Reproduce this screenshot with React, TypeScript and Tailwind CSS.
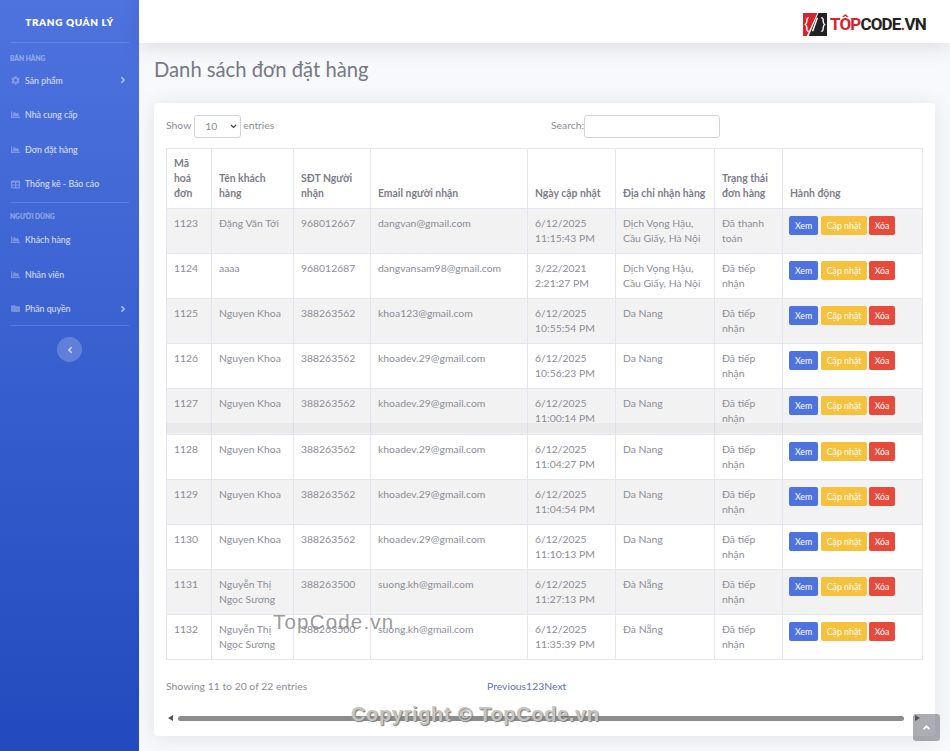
import { FaAngleLeft, FaAngleRight, FaAngleUp, FaChartArea, FaCog, FaFolder, FaTable } from 'react-icons/fa'

type Order = { id: number; name: string; phone: string; email: string; date: string; time: string; addr: string; status: string }

const hanoi = 'Dịch Vọng Hậu, Cầu Giấy, Hà Nội'

const orders: Order[] = [
    { id: 1123, name: 'Đặng Văn Tới', phone: '968012667', email: 'dangvan@gmail.com', date: '6/12/2025', time: '11:15:43 PM', addr: hanoi, status: 'Đã thanh toán' },
    { id: 1124, name: 'aaaa', phone: '968012687', email: 'dangvansam98@gmail.com', date: '3/22/2021', time: '2:21:27 PM', addr: hanoi, status: 'Đã tiếp nhận' },
    { id: 1125, name: 'Nguyen Khoa', phone: '388263562', email: 'khoa123@gmail.com', date: '6/12/2025', time: '10:55:54 PM', addr: 'Da Nang', status: 'Đã tiếp nhận' },
    { id: 1126, name: 'Nguyen Khoa', phone: '388263562', email: 'khoadev.29@gmail.com', date: '6/12/2025', time: '10:56:23 PM', addr: 'Da Nang', status: 'Đã tiếp nhận' },
    { id: 1127, name: 'Nguyen Khoa', phone: '388263562', email: 'khoadev.29@gmail.com', date: '6/12/2025', time: '11:00:14 PM', addr: 'Da Nang', status: 'Đã tiếp nhận' },
    { id: 1128, name: 'Nguyen Khoa', phone: '388263562', email: 'khoadev.29@gmail.com', date: '6/12/2025', time: '11:04:27 PM', addr: 'Da Nang', status: 'Đã tiếp nhận' },
    { id: 1129, name: 'Nguyen Khoa', phone: '388263562', email: 'khoadev.29@gmail.com', date: '6/12/2025', time: '11:04:54 PM', addr: 'Da Nang', status: 'Đã tiếp nhận' },
    { id: 1130, name: 'Nguyen Khoa', phone: '388263562', email: 'khoadev.29@gmail.com', date: '6/12/2025', time: '11:10:13 PM', addr: 'Da Nang', status: 'Đã tiếp nhận' },
    { id: 1131, name: 'Nguyễn Thị Ngọc Sương', phone: '388263500', email: 'suong.kh@gmail.com', date: '6/12/2025', time: '11:27:13 PM', addr: 'Đà Nẵng', status: 'Đã tiếp nhận' },
    { id: 1132, name: 'Nguyễn Thị Ngọc Sương', phone: '388263500', email: 'suong.kh@gmail.com', date: '6/12/2025', time: '11:35:39 PM', addr: 'Đà Nẵng', status: 'Đã tiếp nhận' },
]

const NavItem = ({ icon, label, arrow }: { icon: React.ReactNode; label: string; arrow?: boolean }) => (
    <div className="h-[34.6px] flex items-center pl-[11px] pr-[11px] text-[8.8px] text-white/80">
        <span className="w-[14px] text-[9px] text-white/30">{icon}</span>
        <span className="flex-1">{label}</span>
        {arrow && <FaAngleRight className="text-[10px] text-white/60" />}
    </div>
)

const Sidebar = () => (
    <aside className="w-[139px] shrink-0 h-full flex flex-col bg-gradient-to-b from-[#4e73df] to-[#224abe] px-[10px]">
        <div className="h-[43px] shrink-0 flex items-center justify-center text-white font-extrabold text-[10px] tracking-[0.06em] border-b border-white/15 pt-[2px]">
            TRANG QUẢN LÝ
        </div>
        <div className="pt-[10px] text-[6.6px] font-extrabold text-white/40 leading-[10px]">BÁN HÀNG</div>
        <div className="-mx-[10px]">
            <NavItem icon={<FaCog />} label="Sản phẩm" arrow />
            <NavItem icon={<FaChartArea />} label="Nhà cung cấp" />
            <NavItem icon={<FaChartArea />} label="Đơn đặt hàng" />
            <NavItem icon={<FaTable />} label="Thống kê - Báo cáo" />
        </div>
        <div className="border-t border-white/15 mt-[1px]" />
        <div className="pt-[8px] text-[6.6px] font-extrabold text-white/40 leading-[10px]">NGƯỜI DÙNG</div>
        <div className="-mx-[10px] mt-[1px]">
            <NavItem icon={<FaChartArea />} label="Khách hàng" />
            <NavItem icon={<FaChartArea />} label="Nhân viên" />
            <NavItem icon={<FaFolder />} label="Phân quyền" arrow />
        </div>
        <div className="border-t border-white/15 -mt-[1px]" />
        <button className="self-center mt-[11px] w-[25px] h-[25px] rounded-full bg-white/20 flex items-center justify-center text-white/70 text-[10px]">
            <FaAngleLeft />
        </button>
    </aside>
)

const Logo = () => (
    <div className="flex items-center gap-[2px]">
        <svg width="26" height="25" viewBox="0 0 27 26">
            <path d="M1 1h15L5 25H1z" fill="#d9232a" />
            <path d="M17 1h9v24H7z" fill="#222" />
            <path d="M7 6c-2 0-2 1-2 3s0 3-1.500 4c1.500 1 1.500 2 1.500 4s0 3 2 3" fill="none" stroke="#fff" strokeWidth="1.500" />
            <path d="M20 6c2 0 2 1 2 3s0 3 1.500 4c-1.500 1-1.500 2-1.500 4s0 3-2 3" fill="none" stroke="#fff" strokeWidth="1.500" />
            <path d="M16 6l-5 14" stroke="#fff" strokeWidth="1.500" />
        </svg>
        <span className="text-[17px] font-bold text-[#222] font-['Roboto',sans-serif] tracking-[-0.85px] leading-none">
            <span className="text-[#d9232a]">TÔP</span>CODE<span className="text-[#d9232a]">.</span>VN
        </span>
    </div>
)

const Actions = () => (
    <div className="flex gap-[3px] -ml-[1px] text-[8.8px] text-white">
        <span className="h-[19px] w-[29px] flex items-center justify-center rounded-[2px] bg-[#4e73df]">Xem</span>
        <span className="h-[19px] w-[46px] flex items-center justify-center rounded-[2px] bg-[#f6c23e]">Cập nhật</span>
        <span className="h-[19px] w-[26px] -ml-[1px] flex items-center justify-center rounded-[2px] bg-[#e74a3b]">Xóa</span>
    </div>
)

const th = "border border-[#e3e6f0] px-[7px] py-[7px] align-bottom text-left font-bold text-[#7c7d88]"
const td = "border border-[#e3e6f0] px-[7px] py-[7px] align-top"

const OrdersTable = () => (
    <table className="w-[756px] table-fixed border-collapse text-[10.4px] leading-[15px]">
        <colgroup>
            <col className="w-[45px]" />
            <col className="w-[82px]" />
            <col className="w-[77px]" />
            <col className="w-[157px]" />
            <col className="w-[88px]" />
            <col className="w-[99px]" />
            <col className="w-[68px]" />
            <col className="w-[140px]" />
        </colgroup>
        <thead>
            <tr>
                <th className={th}>Mã hoá đơn</th>
                <th className={th}>Tên khách hàng</th>
                <th className={th}>SĐT Người nhận</th>
                <th className={th}>Email người nhận</th>
                <th className={th}>Ngày cập nhật</th>
                <th className={`${th} whitespace-nowrap`}>Địa chỉ nhận hàng</th>
                <th className={th}>Trạng thái đơn hàng</th>
                <th className={th}>Hành động</th>
            </tr>
        </thead>
        <tbody>
            {orders.map((o, i) => (
                <tr key={o.id} className={`${i % 2 === 0 ? 'bg-[#f2f2f2]' : 'bg-white'} ${o.id === 1127 ? 'h-[46px]' : ''}`}>
                    <td className={td}>{o.id}</td>
                    <td className={td}>{o.name}</td>
                    <td className={td}>{o.phone}</td>
                    <td className={td}>{o.email}</td>
                    <td className={td}>{o.date}<br />{o.time}</td>
                    <td className={td}>{o.addr}</td>
                    <td className={td}>{o.status}</td>
                    <td className={td}><Actions /></td>
                </tr>
            ))}
        </tbody>
    </table>
)

const App = () => (
    <div className="relative w-[950px] h-[751px] overflow-hidden flex bg-[#f8f9fc] font-['Lato','Noto_Sans',sans-serif] text-[#8c8d97]">
        <Sidebar />
        <div className="flex-1 flex flex-col min-w-0">
            <header className="h-[43px] shrink-0 bg-white shadow-[0_4px_20px_rgba(58,59,69,0.15)] flex items-center justify-end pr-[24px] pt-[5px]">
                <Logo />
            </header>
            <main className="pl-[15px] pr-[15px]">
                <h1 className="mt-[14px] text-[20.2px] leading-[25px] text-[#767886]">Danh sách đơn đặt hàng</h1>
                <section className="mt-[21px] w-[781px] h-[633px] bg-white rounded-[4px] shadow-[0_2px_20px_rgba(58,59,69,0.12)] pt-[12px] px-[12px]">
                    <div className="h-[23px] flex items-center text-[10.4px]">
                        <div className="w-[385px] flex items-center gap-[2px]">
                            <span className="pb-[2px]">Show</span>
                            <span className="w-[47px] h-[23px] ml-[1px] border border-[#d1d3e2] rounded-[3px] flex items-center justify-between pl-[10px] pr-[3px]">
                                10 <svg width="7" height="5" viewBox="0 0 7 5"><path d="M1 1l2.500 2.500L6 1" fill="none" stroke="#444" strokeWidth="1.200" /></svg>
                            </span>
                            <span className="pb-[2px] tracking-[-0.05px]">entries</span>
                        </div>
                        <span className="pb-[2px]">Search:</span>
                        <span className="w-[136px] h-[23px] border border-[#d1d3e2] rounded-[3px]" />
                    </div>
                    <div className="mt-[10px]"><OrdersTable /></div>
                    <div className="mt-[19px] flex items-center text-[10.4px] leading-[15px]">
                        <div className="w-[321px]">Showing 11 to 20 of 22 entries</div>
                        <div className="text-[#5a73b5]">Previous123Next</div>
                    </div>
                    <div className="mt-[20px] flex items-center h-[8px]">
                        <svg width="5" height="6" viewBox="0 0 5 6" className="ml-[2px] mr-[5px] shrink-0"><path d="M5 0v6L0 3z" fill="#555" /></svg>
                        <div className="w-[726px] h-[5px] rounded-full bg-[#8c8c8c]" />
                    </div>
                </section>
            </main>
        </div>
        <div className="absolute left-[166px] top-[423px] w-[756px] h-[10px] bg-black/[0.03]" />
        <div className="absolute left-[273px] top-[609px] text-[20.5px] leading-[26px] tracking-[1.2px] text-[#808080]/80 font-['Liberation_Sans',sans-serif]">TopCode.vn</div>
        <div className="absolute left-[351px] top-[701px] text-[20px] leading-[26px] tracking-[0.65px] font-bold text-[#c4c4c4] [text-shadow:1px_1px_1px_#777] font-['Liberation_Sans',sans-serif]">Copyright © TopCode.vn</div>
        <div className="absolute left-[913px] top-[714px] w-[27px] h-[27px] rounded-[3px] bg-[#5a5c69]/50 flex items-center justify-center text-white text-[11px]">
            <FaAngleUp />
        </div>
        <svg width="5" height="6" viewBox="0 0 5 6" className="absolute left-[915px] top-[715px]"><path d="M0 0v6l5-3z" fill="#555" /></svg>
    </div>
)

export default App
